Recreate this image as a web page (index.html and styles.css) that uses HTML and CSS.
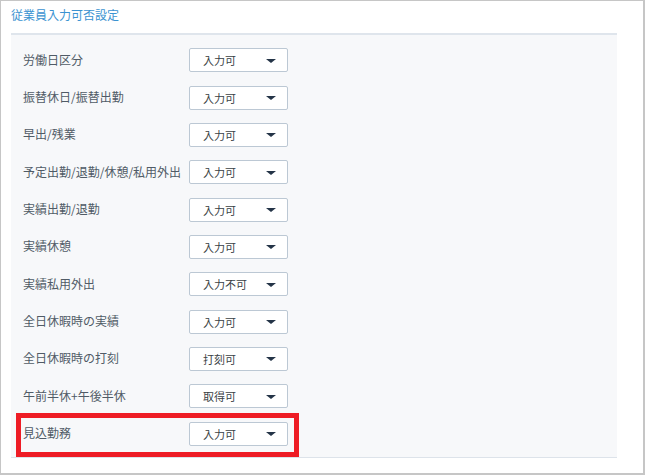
FILE: index.html
```html
<!DOCTYPE html>
<html lang="ja">
<head>
    <meta charset="UTF-8">
    <title>従業員入力可否設定</title>
    <link rel="stylesheet" href="styles.css">
</head>
<body>
    <div class="frame">
        <div class="title">従業員入力可否設定</div>

        <div class="panel">
            <div class="row">
                <div class="label">労働日区分</div>
                <div class="select"><span>入力可</span><i class="arrow"></i></div>
            </div>
            <div class="row">
                <div class="label">振替休日/振替出勤</div>
                <div class="select"><span>入力可</span><i class="arrow"></i></div>
            </div>
            <div class="row">
                <div class="label">早出/残業</div>
                <div class="select"><span>入力可</span><i class="arrow"></i></div>
            </div>
            <div class="row">
                <div class="label">予定出勤/退勤/休憩/私用外出</div>
                <div class="select"><span>入力可</span><i class="arrow"></i></div>
            </div>
            <div class="row">
                <div class="label">実績出勤/退勤</div>
                <div class="select"><span>入力可</span><i class="arrow"></i></div>
            </div>
            <div class="row">
                <div class="label">実績休憩</div>
                <div class="select"><span>入力可</span><i class="arrow"></i></div>
            </div>
            <div class="row">
                <div class="label">実績私用外出</div>
                <div class="select"><span>入力不可</span><i class="arrow"></i></div>
            </div>
            <div class="row">
                <div class="label">全日休暇時の実績</div>
                <div class="select"><span>入力可</span><i class="arrow"></i></div>
            </div>
            <div class="row">
                <div class="label">全日休暇時の打刻</div>
                <div class="select"><span>打刻可</span><i class="arrow"></i></div>
            </div>
            <div class="row">
                <div class="label">午前半休+午後半休</div>
                <div class="select"><span>取得可</span><i class="arrow"></i></div>
            </div>
            <div class="row highlighted">
                <div class="label">見込勤務</div>
                <div class="select"><span>入力可</span><i class="arrow"></i></div>
                <!-- annotation box -->
                <div class="mark"></div>
            </div>
        </div>
    </div>
</body>
</html>
```

FILE: styles.css
```css
body {
    margin: 0;
    font-family: "Noto Sans CJK JP", "Noto Sans", sans-serif;
    background-color: #fff;
}
.frame {
    width: 645px;
    height: 475px;
    box-sizing: border-box;
    border: 1px solid #c6c6c6;
    border-right-width: 2px;
    border-bottom-width: 2px;
    padding: 0 26px 0 10px;
}
.title {
    height: 32px;
    box-sizing: border-box;
    padding-top: 3px;
    line-height: 22px;
    font-size: 12px;
    color: #3b93d1;
}
.panel {
    background-color: #f7f8fa;
    border-top: 2px solid #dfe5ec;
    border-bottom: 1px solid #dde3ea;
    padding: 6.67px 0 5px 12px;
}
.row {
    height: 37.33px;
    display: flex;
    align-items: center;
}
.label {
    width: 166px;
    font-size: 12px;
    color: #505b66;
    margin-top: -2px;
}
.select {
    width: 99px;
    height: 24px;
    box-sizing: border-box;
    border: 1px solid #bcc8d4;
    border-radius: 2px;
    background-color: #fff;
    display: flex;
    align-items: center;
    justify-content: space-between;
    padding: 0 11px 0 13px;
    font-size: 11px;
    color: #3a3f45;
}
.arrow {
    width: 0;
    height: 0;
    margin-top: 1px;
    border-left: 5px solid transparent;
    border-right: 5px solid transparent;
    border-top: 4px solid #243447;
}
.highlighted {
    position: relative;
}
.mark {
    position: absolute;
    left: -7px;
    top: -2px;
    width: 283px;
    height: 44px;
    box-sizing: border-box;
    border: 5px solid #ee1c25;
}
```
